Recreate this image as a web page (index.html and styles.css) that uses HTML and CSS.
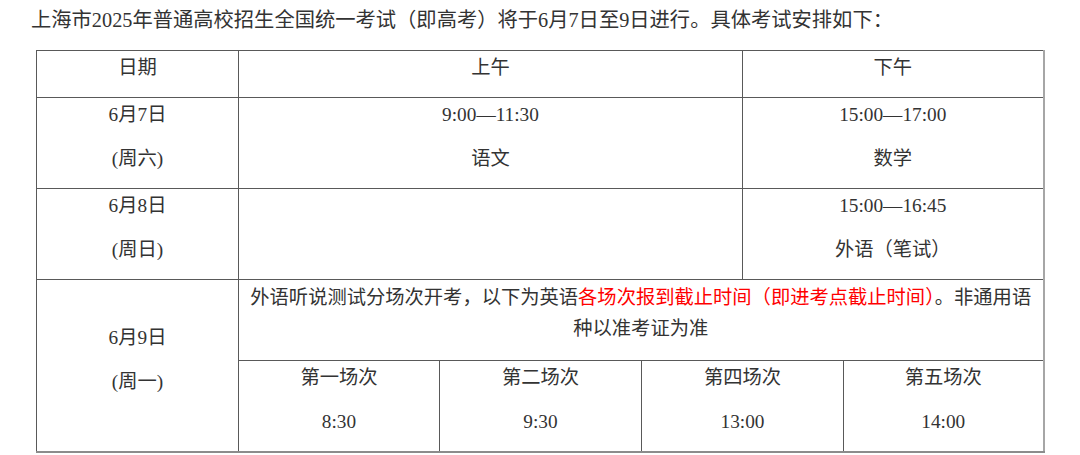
FILE: index.html
```html
<!DOCTYPE html>
<html lang="zh-CN">
<head>
<meta charset="utf-8">
<title>上海市2025年高考安排</title>
<link rel="stylesheet" href="styles.css">
</head>
<body>
<div class="page">
  <p class="intro">上海市2025年普通高校招生全国统一考试（即高考）将于6月7日至9日进行。具体考试安排如下：</p>
  <table class="schedule">
    <colgroup>
      <col class="c-date">
      <col class="c-a">
      <col class="c-b">
      <col class="c-c">
      <col class="c-d">
      <col class="c-e">
    </colgroup>
    <tr class="r-head">
      <td><p>日期</p></td>
      <td colspan="3"><p>上午</p></td>
      <td colspan="2"><p>下午</p></td>
    </tr>
    <tr class="r-1">
      <td><p>6月7日</p><p>(周六)</p></td>
      <td colspan="3"><p>9:00—11:30</p><p>语文</p></td>
      <td colspan="2"><p>15:00—17:00</p><p>数学</p></td>
    </tr>
    <tr class="r-2">
      <td><p>6月8日</p><p>(周日)</p></td>
      <td colspan="3"></td>
      <td colspan="2"><p>15:00—16:45</p><p>外语（笔试）</p></td>
    </tr>
    <tr class="r-3a">
      <td rowspan="2"><p>6月9日</p><p>(周一)</p></td>
      <td colspan="5" class="note"><p>外语听说测试分场次开考，以下为英语<span class="red">各场次报到截止时间（即进考点截止时间）</span>。非通用语种以准考证为准</p></td>
    </tr>
    <tr class="r-3b">
      <td><p>第一场次</p><p>8:30</p></td>
      <td><p>第二场次</p><p>9:30</p></td>
      <td colspan="2"><p>第四场次</p><p>13:00</p></td>
      <td><p>第五场次</p><p>14:00</p></td>
    </tr>
  </table>
</div>
</body>
</html>
```

FILE: styles.css
```css
html, body {
  margin: 0;
  padding: 0;
  background: #ffffff;
}

.page {
  padding: 4px 0 0 31px;
  color: #333333;
  font-family: "Liberation Serif", "Noto Sans CJK SC", serif;
}

.intro {
  margin: 0 0 14px 0;
  font-size: 20.3px;
  line-height: 32px;
}

.schedule {
  margin-left: 5px;
  border-collapse: collapse;
  table-layout: fixed;
  width: 1007px;
  font-size: 19.3px;
  line-height: 31px;
}

.c-date { width: 202px; }
.c-a { width: 201px; }
.c-b { width: 202px; }
.c-c { width: 101px; }
.c-d { width: 101px; }
.c-e { width: 200px; }

.schedule td {
  border: 1px solid #595959;
  padding: 1px 6px 14px;
  text-align: center;
  vertical-align: middle;
}

.schedule td.note {
  padding: 0 5px 14px;
}

.schedule td:last-child {
  border-right: 2px solid #a6a6a6;
}

.r-3a td:first-child {
  border-right: 1px solid #595959;
}

.schedule p {
  margin: 0;
}

.schedule p + p {
  margin-top: 13px;
}

.r-head { height: 46px; }
.r-1 { height: 91px; }
.r-2 { height: 90px; }
.r-3a { height: 81px; }
.r-3b { height: 89px; }

.r-3b td,
.r-3a td:first-child {
  border-bottom: 2px solid #8c8c8c;
}

.red {
  color: #ff0000;
}
```
